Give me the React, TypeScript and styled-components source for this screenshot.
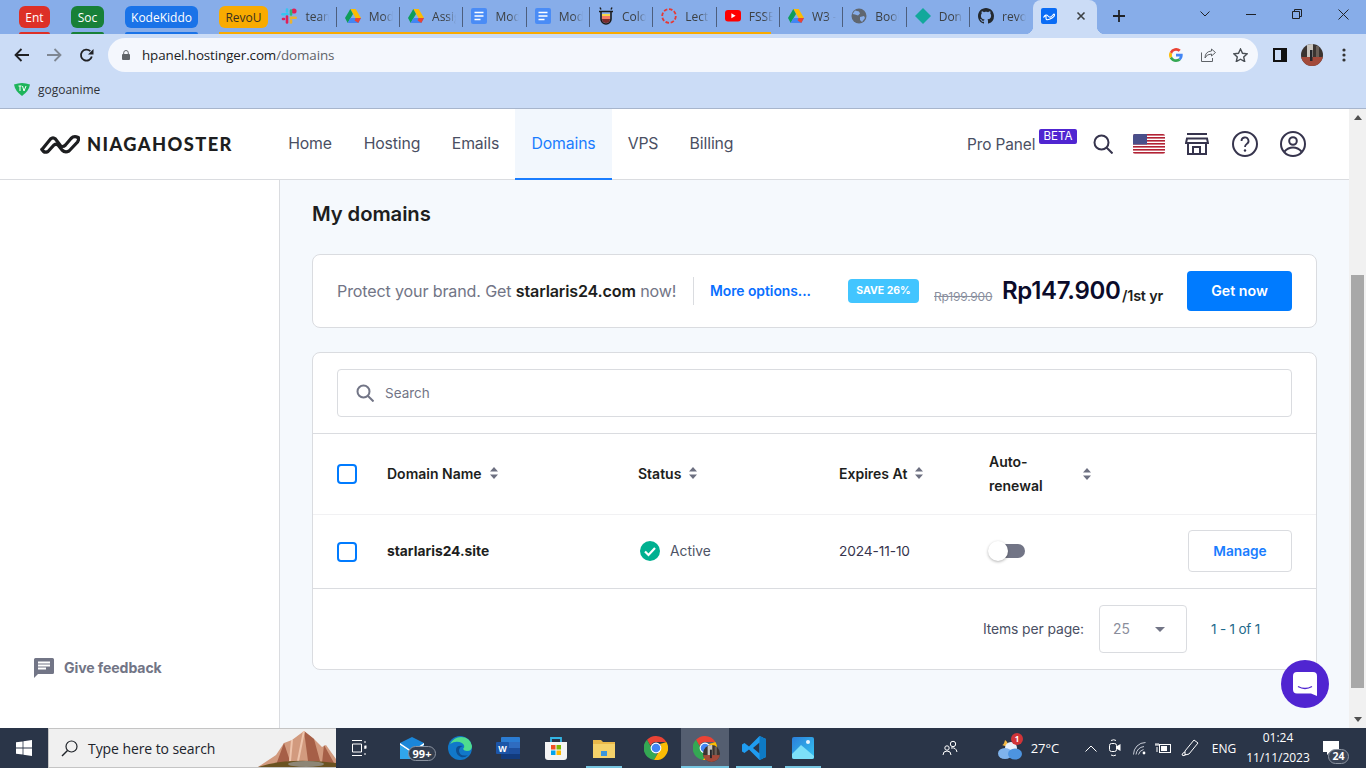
import React from "react";
import styled, { createGlobalStyle } from "styled-components";

const WEB = `"Inter", "Liberation Sans", sans-serif`;
const UI = `"Open Sans", "Noto Sans", sans-serif`;

const Global = createGlobalStyle`
  html, body { margin: 0; padding: 0; height: 100%; overflow: hidden; background: #fff; }
  * { box-sizing: border-box; }
`;

const Shell = styled.div`
  width: 1366px; height: 768px; display: flex; flex-direction: column; overflow: hidden; font-family: ${WEB};
`;

/* ---------- Chrome tabs ---------- */
const Strip = styled.div`
  height: 34px; background: #87ade9; display: flex; align-items: stretch; padding-left: 19px; flex: none;
`;
const Chip = styled.div<{ $bg: string; $w: number; $ml: number; $dark?: boolean }>`
  position: relative; width: ${p => p.$w}px; margin-left: ${p => p.$ml}px; flex: none; height: 22px; margin-top: 6px;
  border-radius: 6px; background: ${p => p.$bg}; color: ${p => (p.$dark ? "#3a3020" : "#fff")};
  font: 12px ${UI}; display: flex; align-items: center; justify-content: center;
  ${p => !p.$dark && `&::after { content: ""; position: absolute; left: 0; right: 0; top: 26px; height: 2px; background: ${p.$bg}; border-radius: 2px 2px 0 0; }`}
`;
const TabGroup = styled.div`
  position: relative; display: flex; margin-left: 21px; flex: none;
  &::after { content: ""; position: absolute; left: 0; right: 9px; bottom: 0; height: 2px; background: #f9ab00; }
`;
const GroupGap = styled.span`width: 5.4px; flex: none;`;
const Tab = styled.div`
  position: relative; width: 63.33px; flex: none; height: 32px; padding-left: 8px; display: flex; align-items: center; gap: 8px;
  color: #3c4043; font: 12px ${UI};
  &::after { content: ""; position: absolute; right: 0; top: 7px; height: 20px; width: 1px; background: #4d5f7e; }
`;
const TabLabel = styled.span`
  width: 24px; overflow: hidden; white-space: nowrap; -webkit-mask-image: linear-gradient(90deg, #000 60%, transparent);
  mask-image: linear-gradient(90deg, #000 60%, transparent);
`;
const LastTab = styled(Tab)`&::after { display: none; }`;
const ActiveTab = styled.div`
  position: relative; width: 64px; height: 34px; flex: none; background: #cbdcf6; border-radius: 8px 8px 0 0;
  display: flex; align-items: center; padding: 0 11px 2px 8px; justify-content: space-between;
  &::before, &::after { content: ""; position: absolute; bottom: 0; width: 8px; height: 8px; }
  &::before { left: -8px; background: radial-gradient(circle at 0 0, transparent 8px, #cbdcf6 8.5px); }
  &::after { right: -8px; background: radial-gradient(circle at 100% 0, transparent 8px, #cbdcf6 8.5px); }
`;
const NewTab = styled.div`width: 44px; flex: none; display: flex; align-items: center; justify-content: center; padding-bottom: 2px;`;
const WinControls = styled.div`margin-left: auto; display: flex;`;
const WinBtn = styled.div`width: 46px; display: flex; align-items: center; justify-content: center; padding-bottom: 6px;`;

/* ---------- Chrome toolbar ---------- */
const Toolbar = styled.div`
  height: 38px; background: #cbdcf6; display: flex; align-items: center; padding: 4px 6px 0 6px; flex: none;
`;
const ToolBtn = styled.div`width: 32px; height: 34px; flex: none; display: flex; align-items: center; justify-content: center;`;
const Omnibox = styled.div`
  flex: 1; height: 34px; margin: 0 6px; background: #f4f7fd; border-radius: 17px; display: flex; align-items: center;
  padding: 0 2px 0 14px; font: 13.4px ${UI}; color: #202124; letter-spacing: -0.1px;
`;
const Url = styled.span`margin-left: 12px; flex: 1; color: #202124; span { color: #5f6368; }`;
const Bookmarks = styled.div`
  height: 37px; background: #cbdcf6; border-bottom: 1px solid #a7b5cc; display: flex; align-items: center; gap: 8px;
  padding: 0 0 2px 14px; font: 12px ${UI}; color: #303338; flex: none; letter-spacing: -0.02px;
`;

/* ---------- Page ---------- */
const Viewport = styled.div`flex: 1; min-height: 0; display: flex; position: relative;`;
const Page = styled.div`flex: 1; min-width: 0; display: flex; flex-direction: column;`;
const Header = styled.header`
  height: 71px; flex: none; background: #fff; border-bottom: 1px solid #dadce0; display: flex; align-items: stretch; padding-left: 40px; padding-right: 43px;
`;
const Logo = styled.div`width: 191px; flex: none; display: flex; align-items: center; gap: 7px;`;
const LogoText = styled.span`font: 900 18.3px "Lato", sans-serif; letter-spacing: 1.4px; color: #1d1e20; white-space: nowrap;`;
const Nav = styled.nav`display: flex; margin-left: 41px;`;
const NavItem = styled.a<{ $w: number; $active?: boolean }>`
  width: ${p => p.$w + 32}px; display: flex; align-items: center; justify-content: center; font-size: 15.8px; letter-spacing: -0.13px; margin-bottom: -1px; white-space: nowrap;
  padding-bottom: 1px;
  color: ${p => (p.$active ? "#1a7dff" : "#4a4f63")}; background: ${p => (p.$active ? "#f2f7fd" : "transparent")};
  border-bottom: 2px solid ${p => (p.$active ? "#1a7dff" : "transparent")};
`;
const HeaderRight = styled.div`margin-left: auto; display: flex; align-items: center;`;
const ProPanel = styled.span`font-size: 15.4px; color: #4a4f63; letter-spacing: -0.1px; white-space: nowrap; width: 68px;`;
const Beta = styled.span`
  align-self: flex-start; margin: 20px 0 0 4px; width: 38px; height: 15px; background: #5025d1; color: #fff; border-radius: 2px;
  font-size: 11.5px; line-height: 15px; text-align: center;
`;
const HeadIcon = styled.div<{ $ml: number }>`margin-left: ${p => p.$ml}px; display: flex; flex: none;`;

const Body = styled.div`flex: 1; min-height: 0; display: flex;`;
const Sidebar = styled.aside`
  width: 280px; flex: none; background: #fff; border-right: 1px solid #dadce0; display: flex; flex-direction: column; justify-content: flex-end;
  padding: 0 0 50px 34px;
`;
const Feedback = styled.div`display: flex; align-items: center; gap: 10px; color: #727586; font-weight: 700; font-size: 14.1px; letter-spacing: -0.1px;`;
const FeedbackLabel = styled.span`padding-bottom: 2px;`;
const Main = styled.main`flex: 1; min-width: 0; background: #f5f9fd; padding: 20px 32px 0;`;
const Title = styled.h1`margin: 0 0 26px; font-size: 20.3px; line-height: 28px; font-weight: 600; color: #1d1e20; letter-spacing: -0.1px;`;
const Card = styled.section`background: #fff; border: 1px solid #dadce0; border-radius: 8px;`;
const Promo = styled(Card)`height: 74px; display: flex; align-items: center; padding: 0 24px 1px; margin-bottom: 24px;`;
const PromoText = styled.span`
  font-size: 16.1px; color: #727586; letter-spacing: -0.15px; white-space: nowrap; width: 340px;
  b { color: #1d1e20; font-weight: 600; }
`;
const Divider = styled.span`width: 1px; height: 28px; background: #dadce0; margin-left: 16px;`;
const More = styled.a`margin-left: 16px; width: 101px; color: #0a6fff; font-weight: 600; font-size: 13.9px; white-space: nowrap; letter-spacing: -0.05px;`;
const Save = styled.span`
  margin-left: 37px; width: 71px; height: 24px; border-radius: 4px; background: #42c5ff; color: #fff; font-size: 10.5px; font-weight: 700;
  display: flex; align-items: center; justify-content: center; white-space: nowrap;
`;
const OldPrice = styled.s`margin-left: 15px; width: 59px; margin-top: 12px; font-size: 12px; color: #8a8f9e; letter-spacing: -0.2px; white-space: nowrap;`;
const Price = styled.span`margin-left: 9px; font-size: 24px; font-weight: 600; color: #0b0b2a; letter-spacing: -0.3px; white-space: nowrap; width: 120px;`;
const Per = styled.span`margin-top: 9px; font-size: 14.4px; font-weight: 600; color: #1d1e20; white-space: nowrap; width: 42px; letter-spacing: -0.2px;`;
const GetNow = styled.button`
  margin-left: 23px; width: 105px; height: 40px; border: 0; border-radius: 4px; background: #007bff; color: #fff; font: 600 14.2px ${WEB};
`;
const SearchRow = styled.div`height: 81px; padding: 16px 24px; border-bottom: 1px solid #dadce0;`;
const SearchBox = styled.div`
  height: 48px; border: 1px solid #dadce0; border-radius: 4px; display: flex; align-items: center; gap: 11px; padding: 0 0 1px 18px;
  color: #727586; font-size: 13.5px;
`;
const GridRow = styled.div<{ $h: number; $line: string; $up?: boolean }>`
  display: grid; grid-template-columns: 50px 251px 201px 150px 1fr auto; align-items: center;
  height: ${p => p.$h}px; padding: 0 24px ${p => (p.$up ? 2 : 0)}px; border-bottom: 1px solid ${p => p.$line};
`;
const Check = styled.span<{ $lower?: boolean }>`
  display: block; width: 20px; height: 20px; border: 2px solid #007bff; border-radius: 4px; margin-top: ${p => (p.$lower ? 2 : 0)}px;
`;
const HeadCell = styled.div<{ $lift?: boolean }>`
  display: flex; align-items: center; gap: 8px; font-size: 14px; font-weight: 600; color: #1d1e20; padding-bottom: ${p => (p.$lift ? 2 : 0)}px;
`;
const WrapLabel = styled.span`width: 86px; line-height: 24px;`;
const DomainName = styled.span`font-size: 13.8px; font-weight: 700; color: #1d1e20;`;
const Status = styled.div`display: flex; align-items: center; gap: 10px; margin-left: 2px; color: #4e5365; font-size: 13.8px;`;
const DateText = styled.span`font-size: 13.7px; color: #36344d; letter-spacing: -0.1px;`;
const Toggle = styled.div`
  position: relative; width: 37px; height: 20px; margin-left: -1px;
  &::before { content: ""; position: absolute; left: 8px; right: 0; top: 3px; height: 14px; background: #727586; border-radius: 7px; }
  &::after { content: ""; position: absolute; left: 0; top: 0; width: 20px; height: 20px; border-radius: 50%; background: #fff; box-shadow: 0 1px 3px rgba(0,0,0,.3); }
`;
const Manage = styled.button`
  width: 104px; height: 42px; background: #fff; border: 1px solid #dadce0; border-radius: 4px; color: #1a7dff; font: 600 13.7px ${WEB};
`;
const Pager = styled.div`height: 80px; display: flex; align-items: center; justify-content: flex-end; padding-right: 56px; font-size: 13.5px; color: #4a4f63;`;
const PerPage = styled.span`font-size: 13.9px; letter-spacing: -0.1px;`;
const Select = styled.div`
  margin: 0 24px 0 15px; width: 88px; height: 48px; border: 1px solid #dadce0; border-radius: 4px; display: flex; align-items: center;
  justify-content: space-between; padding: 0 21px 0 13px; color: #8a8d9b; font-size: 13.8px;
  &::after { content: ""; border: 5px solid transparent; border-top: 5px solid #727586; border-bottom: 0; }
`;
const Range = styled.span`color: #1f6a8c; letter-spacing: -0.2px;`;
const Messenger = styled.div`
  position: absolute; right: 37px; bottom: 20px; width: 48px; height: 48px; border-radius: 50%; background: #5025d1; display: flex; align-items: center; justify-content: center;
`;
const Scrollbar = styled.div`width: 17px; flex: none; background: #f1f1f1; display: flex; flex-direction: column; align-items: center;`;
const ArrowBtn = styled.div<{ $down?: boolean }>`
  height: 17px; width: 17px; flex: none; display: flex; align-items: center; justify-content: center;
  &::after { content: ""; border: 4px solid transparent; ${p => (p.$down ? "border-top: 5px solid #505050; border-bottom: 0;" : "border-bottom: 5px solid #505050; border-top: 0;")} }
`;
const Thumb = styled.div`width: 13px; height: 413px; margin-top: 149px; background: #a8a8a8;`;
const ScrollGap = styled.div`flex: 1;`;

/* ---------- Taskbar ---------- */
const Taskbar = styled.footer`height: 40px; flex: none; background: #2a3548; display: flex; align-items: stretch; color: #fff; font-family: ${UI};`;
const StartBtn = styled.div`width: 48px; flex: none; display: flex; align-items: center; justify-content: center;`;
const SearchBar = styled.div`
  width: 288px; flex: none; background: #f0f0f0; border: 1px solid #c4c4c4; border-width: 1px 0 1px 1px; display: flex; align-items: center;
  padding-left: 12px; color: #20242c; font-size: 14px; position: relative; overflow: hidden;
`;
const SearchText = styled.span`margin-left: 10px; letter-spacing: -0.08px; white-space: nowrap;`;
const Mountains = styled.div`position: absolute; right: 0; bottom: 0; display: flex;`;
const AppSlot = styled.div<{ $ml?: number; $active?: boolean; $on?: boolean }>`
  position: relative; width: 48px; flex: none; margin-left: ${p => p.$ml ?? 0}px; display: flex; align-items: center; justify-content: center;
  background: ${p => (p.$active ? "#545e70" : "transparent")};
  ${p => p.$on && `&::after { content: ""; position: absolute; bottom: 0; left: ${p.$active ? 0 : 6}px; right: ${p.$active ? 0 : 6}px; height: 2px; background: #76c5e0; }`}
`;
const MiniAvatar = styled.div`position: absolute; left: 22px; top: 17px; display: flex;`;
const Pill = styled.span`
  position: absolute; right: 0; top: 18px; height: 15px; min-width: 28px; padding: 0 2px; border-radius: 8px; background: #333d4e; border: 1px solid #8b93a0;
  color: #fff; font: 700 11px/13px ${UI}; text-align: center;
`;
const Tray = styled.div`margin-left: auto; width: 436px; display: flex; align-items: center; flex: none;`;
const TraySlot = styled.div<{ $w: number; $ml?: number }>`
  position: relative; width: ${p => p.$w}px; margin-left: ${p => p.$ml ?? 0}px; flex: none; display: flex; align-items: center; justify-content: center; white-space: nowrap;
`;
const Temp = styled.span`font-size: 13px;`;
const Lang = styled.span`font-size: 12px;`;
const Clock = styled.div`font-size: 12px; line-height: 20px; text-align: center; white-space: nowrap;`;
const RedDot = styled.span`
  position: absolute; right: -1px; top: -3px; width: 12px; height: 12px; border-radius: 50%; background: #d13438; color: #fff; font: 700 8px/12px ${UI}; text-align: center;
`;
const Count = styled.span`
  position: absolute; right: 2px; top: 8px; width: 21px; height: 15px; border-radius: 8px; background: #3a4456; border: 1px solid #8b93a0;
  font: 700 10.5px/13px ${UI}; text-align: center; color: #fff;
`;

/* ---------- Drawings ---------- */
const Drive = () => (
  <svg width="16" height="14" viewBox="0 0 16 14" style={{ flex: "none" }}>
    <path d="M5.3 0h5.4l5.3 9h-5.4z" fill="#fbbc04" />
    <path d="M5.3 0L0 9l2.7 5 5.3-9z" fill="#0f9d58" />
    <path d="M2.7 14h10.6L16 9H5.4z" fill="#4285f4" />
    <path d="M13.3 14L16 9h-5.4l-1 2.6z" fill="#ea4335" />
  </svg>
);
const Doc = () => (
  <svg width="16" height="16" viewBox="0 0 16 16" style={{ flex: "none" }}>
    <rect width="16" height="16" rx="2" fill="#4a8cf6" />
    <path d="M3.5 4.5h9M3.5 8h9M3.5 11.5h6" stroke="#fff" strokeWidth="1.6" />
  </svg>
);
const Slack = () => (
  <svg width="16" height="16" viewBox="0 0 16 16" style={{ flex: "none" }}>
    <path d="M1.5 6.2h5" stroke="#36c5f0" strokeWidth="2.6" strokeLinecap="round" />
    <path d="M6 1.5v2" stroke="#36c5f0" strokeWidth="2.6" strokeLinecap="round" />
    <circle cx="13" cy="3" r="2.6" fill="#e01e5a" />
    <path d="M9.7 9.7h5" stroke="#ecb22e" strokeWidth="2.6" strokeLinecap="round" />
    <path d="M10 12.5v2" stroke="#ecb22e" strokeWidth="2.6" strokeLinecap="round" />
    <path d="M6 8.5v6" stroke="#e01e5a" strokeWidth="2.6" strokeLinecap="round" />
    <path d="M2 11h1" stroke="#e01e5a" strokeWidth="2.6" strokeLinecap="round" />
    <path d="M10 2.5v4" stroke="#2eb67d" strokeWidth="2.6" strokeLinecap="round" />
  </svg>
);
const Potion = () => (
  <svg width="16" height="18" viewBox="0 0 16 18" style={{ flex: "none" }}>
    <path d="M1 4.5h14M3 5v7a5 5 0 0 0 10 0V5" fill="none" stroke="#1b1b1b" strokeWidth="1.6" />
    <path d="M4 7h8v2H4z" fill="#f6d548" />
    <path d="M4 9h8v3H4z" fill="#f47a64" />
    <path d="M4 12h8a4 4 0 0 1-8 0z" fill="#7a2c2c" />
    <path d="M2 0.5l1 2M14 0.5l-1 2" stroke="#1b1b1b" strokeWidth="1.4" />
  </svg>
);
const DashRing = () => (
  <svg width="16" height="16" viewBox="0 0 16 16" style={{ flex: "none" }}>
    <circle cx="8" cy="8" r="6.8" fill="none" stroke="#e53935" strokeWidth="1.8" strokeDasharray="3.6 1.7" />
  </svg>
);
const YouTube = () => (
  <svg width="16" height="12" viewBox="0 0 16 12" style={{ flex: "none" }}>
    <rect width="16" height="11.5" rx="3" fill="#f00" />
    <path d="M6.4 3.3v5l4.2-2.5z" fill="#fff" />
  </svg>
);
const Globe = () => (
  <svg width="16" height="16" viewBox="0 0 16 16" style={{ flex: "none" }}>
    <circle cx="8" cy="8" r="7.5" fill="#5f6670" />
    <path d="M4 2.5l4 1 1 2-2 2-3-1-2.5-.5zM9 9l4-1 1 2-3 4-2-2z" fill="#87ade9" />
  </svg>
);
const Diamond = () => (
  <svg width="16" height="16" viewBox="0 0 16 16" style={{ flex: "none" }}>
    <path d="M8 0l8 8-8 8-8-8z" fill="#12a89b" />
  </svg>
);
const GitHub = () => (
  <svg width="16" height="16" viewBox="0 0 16 16" style={{ flex: "none" }}>
    <path fill="#24292f" d="M8 0C3.58 0 0 3.58 0 8c0 3.54 2.29 6.53 5.47 7.59.4.07.55-.17.55-.38 0-.19-.01-.82-.01-1.49-2.01.37-2.53-.49-2.69-.94-.09-.23-.48-.94-.82-1.13-.28-.15-.68-.52-.01-.53.63-.01 1.08.58 1.23.82.72 1.21 1.87.87 2.33.66.07-.52.28-.87.51-1.07-1.78-.2-3.64-.89-3.64-3.95 0-.87.31-1.59.82-2.15-.08-.2-.36-1.02.08-2.12 0 0 .67-.21 2.2.82.64-.18 1.32-.27 2-.27s1.36.09 2 .27c1.53-1.04 2.2-.82 2.2-.82.44 1.1.16 1.92.08 2.12.51.56.82 1.27.82 2.15 0 3.07-1.87 3.75-3.65 3.95.29.25.54.73.54 1.48 0 1.07-.01 1.93-.01 2.2 0 .21.15.46.55.38A8.01 8.01 0 0 0 16 8c0-4.42-3.58-8-8-8z" />
  </svg>
);
const WaveMark = () => (
  <svg width="40" height="20" viewBox="0 0 40 20" style={{ flex: "none" }}>
    <path d="M2 15.5 L10.5 5 Q13 2.5 15.5 5 L20 11 Q22.5 14 25.5 11 L31 4.5 Q34 1.5 38 3.5" fill="none" stroke="#1d1e20" strokeWidth="3.2" strokeLinecap="round" />
    <path d="M2 15.5 Q4 19.5 8 17.5 L14 11 Q16 9.5 18 11 L22 16 Q25 19 29 17 L37.5 8 Q39.5 5 38 3.5" fill="none" stroke="#1d1e20" strokeWidth="3.2" strokeLinecap="round" />
  </svg>
);
const ChromeLogo = ({ size = 24 }: { size?: number }) => (
  <svg width={size} height={size} viewBox="0 0 24 24" style={{ flex: "none" }}>
    <path d="M12 0a12 12 0 0 1 10.4 6H12a6 6 0 0 0-5.6 3.8L3 3.8A12 12 0 0 1 12 0z" fill="#ea4335" />
    <path d="M3 3.8l5.2 9.2a5 5 0 0 0 5 5L10 24A12 12 0 0 1 3 3.8z" fill="#34a853" />
    <path d="M22.4 6A12 12 0 0 1 10 23.9l5.4-9.4A5 5 0 0 0 16 8z" fill="#fbbc04" />
    <circle cx="12" cy="12" r="5.4" fill="#fff" />
    <circle cx="12" cy="12" r="4.3" fill="#4285f4" />
  </svg>
);
const GLogo = () => (
  <svg width="14" height="14" viewBox="0 0 14 14">
    <path d="M13.7 7.1c0-.5 0-.9-.1-1.3H7v2.6h3.8c-.2.9-.7 1.6-1.4 2.1l2.2 1.7c1.3-1.2 2.1-3 2.1-5.1z" fill="#4285f4" />
    <path d="M7 14c1.9 0 3.4-.6 4.6-1.7L9.4 10.6c-.6.4-1.4.7-2.4.7-1.8 0-3.4-1.2-3.9-2.9L.8 10.2C2 12.5 4.3 14 7 14z" fill="#34a853" />
    <path d="M3.1 8.4a4.2 4.2 0 0 1 0-2.7L.8 3.9a7 7 0 0 0 0 6.3z" fill="#fbbc04" />
    <path d="M7 2.8c1 0 1.9.4 2.7 1l2-2A7 7 0 0 0 .8 3.9l2.3 1.8C3.6 4 5.2 2.8 7 2.8z" fill="#ea4335" />
  </svg>
);
const Flag = () => (
  <svg width="32" height="20" viewBox="0 0 32 20">
    <defs><clipPath id="flagclip"><rect width="32" height="20" rx="2" /></clipPath></defs>
    <g clipPath="url(#flagclip)">
      <rect width="32" height="20" fill="#fff" />
      {[0, 3, 6, 9, 12, 15, 18].map(y => <rect key={y} y={y} width="32" height="1.6" fill="#b22234" />)}
      <rect width="14" height="10.5" fill="#4a4f8a" />
    </g>
  </svg>
);
const Avatar = ({ size }: { size: number }) => (
  <svg width={size} height={size} viewBox="0 0 22 22" style={{ flex: "none" }}>
    <defs><clipPath id={`av${size}`}><circle cx="11" cy="11" r="11" /></clipPath></defs>
    <g clipPath={`url(#av${size})`}>
      <rect width="22" height="22" fill="#3b3430" />
      <rect x="6" y="0" width="6" height="14" fill="#c9c5bf" />
      <rect x="15" y="2" width="3" height="12" fill="#6b6058" />
      <rect y="13" width="22" height="9" fill="#a34a3a" />
      <rect x="9" y="6" width="2.5" height="11" fill="#24262b" />
    </g>
  </svg>
);

const tabs: [React.ReactNode, string][] = [
  [<Slack />, "team"], [<Drive />, "Mod"], [<Drive />, "Assig"], [<Doc />, "Mod"], [<Doc />, "Mod"],
  [<Potion />, "Colo"], [<DashRing />, "Lectu"], [<YouTube />, "FSSE"],
];
const tabsAfter: [React.ReactNode, string][] = [[<Drive />, "W3 -"], [<Globe />, "Bool"], [<Diamond />, "Don"]];

const Sort = () => (
  <svg width="8" height="12" viewBox="0 0 8 12" style={{ flex: "none" }}>
    <path d="M4 0l4 4.6H0zM4 12L0 7.4h8z" fill="#6d7081" />
  </svg>
);

export default function App() {
  return (
    <Shell>
      <Global />
      <Strip>
        <Chip $bg="#dd3027" $w={31} $ml={0}>Ent</Chip>
        <Chip $bg="#188038" $w={33} $ml={21}>Soc</Chip>
        <Chip $bg="#1a73e8" $w={73} $ml={21}>KodeKiddo</Chip>
        <TabGroup>
          <Chip $bg="#f9ab00" $w={49} $ml={0} $dark>RevoU</Chip>
          <GroupGap />
          {tabs.map(([icon, label], i) => <Tab key={i}>{icon}<TabLabel>{label}</TabLabel></Tab>)}
        </TabGroup>
        {tabsAfter.map(([icon, label], i) => <Tab key={i}>{icon}<TabLabel>{label}</TabLabel></Tab>)}
        <LastTab><GitHub /><TabLabel>revo</TabLabel></LastTab>
        <ActiveTab>
          <svg width="16" height="16" viewBox="0 0 16 16">
            <rect width="16" height="16" rx="2" fill="#0a6cf5" />
            <path d="M2.5 9.5Q5 5.5 7 8t4.5-.5Q13.5 5 13.5 7T9 11 5 9.5 2.5 9.5z" fill="none" stroke="#fff" strokeWidth="1.1" />
          </svg>
          <svg width="10" height="10" viewBox="0 0 10 10"><path d="M1.5 1.5l7 7M8.5 1.5l-7 7" stroke="#3c4043" strokeWidth="1.6" /></svg>
        </ActiveTab>
        <NewTab>
          <svg width="12" height="12" viewBox="0 0 12 12"><path d="M6 0v12M0 6h12" stroke="#1f2227" strokeWidth="1.8" /></svg>
        </NewTab>
        <WinControls>
          <WinBtn><svg width="10" height="6" viewBox="0 0 10 6"><path d="M.5.5L5 5 9.5.5" fill="none" stroke="#1f2227" /></svg></WinBtn>
          <WinBtn><svg width="10" height="1" viewBox="0 0 10 1"><path d="M0 .5h10" stroke="#1f2227" /></svg></WinBtn>
          <WinBtn><svg width="10" height="10" viewBox="0 0 10 10"><path d="M.5 2.5h7v7h-7zM2.5 2.5v-2h7v7h-2" fill="none" stroke="#1f2227" /></svg></WinBtn>
          <WinBtn><svg width="11" height="11" viewBox="0 0 11 11"><path d="M.5.5l10 10M10.5.5l-10 10" stroke="#1f2227" /></svg></WinBtn>
        </WinControls>
      </Strip>
      <Toolbar>
        <ToolBtn><svg width="16" height="14" viewBox="0 0 16 14"><path d="M15 7H2M7.5 1L1.5 7l6 6" fill="none" stroke="#202124" strokeWidth="1.8" /></svg></ToolBtn>
        <ToolBtn><svg width="16" height="14" viewBox="0 0 16 14"><path d="M1 7h13M8.5 1l6 6-6 6" fill="none" stroke="#7f8793" strokeWidth="1.8" /></svg></ToolBtn>
        <ToolBtn>
          <svg width="15" height="15" viewBox="0 0 15 15"><path d="M12.8 8.5A5.5 5.5 0 1 1 11.3 3.2" fill="none" stroke="#202124" strokeWidth="1.8" /><path d="M14.5 1v5.5H9z" fill="#202124" /></svg>
        </ToolBtn>
        <Omnibox>
          <svg width="8" height="10" viewBox="0 0 8 10" style={{ flex: "none" }}><path d="M1.7 4V2.8a2.3 2.3 0 0 1 4.6 0V4" fill="none" stroke="#5f6368" /><rect y="4" width="8" height="6" rx="1" fill="#5f6368" /></svg>
          <Url>hpanel.hostinger.com<span>/domains</span></Url>
          <ToolBtn><GLogo /></ToolBtn>
          <ToolBtn>
            <svg width="15" height="14" viewBox="0 0 15 14"><path d="M10.5 1l4 3.5-4 3.5V6Q5.5 6 4 10 4 3.5 10.5 3zM.5 4.5v9h11V10" fill="none" stroke="#5f6368" /></svg>
          </ToolBtn>
          <ToolBtn>
            <svg width="15" height="14" viewBox="0 0 15 14"><path d="M7.5 1l2 4.3 4.7.5-3.5 3.2 1 4.6-4.2-2.4-4.2 2.4 1-4.6L.8 5.8l4.7-.5z" fill="none" stroke="#4a4f55" strokeWidth="1.4" /></svg>
          </ToolBtn>
        </Omnibox>
        <ToolBtn><svg width="14" height="14" viewBox="0 0 14 14"><path d="M1 1h12v12H1z" fill="none" stroke="#111" strokeWidth="2" /><rect x="8" y="1" width="5" height="12" fill="#111" /></svg></ToolBtn>
        <ToolBtn><Avatar size={22} /></ToolBtn>
        <ToolBtn><svg width="4" height="14" viewBox="0 0 4 14"><g fill="#333"><circle cx="2" cy="2" r="1.6" /><circle cx="2" cy="7" r="1.6" /><circle cx="2" cy="12" r="1.6" /></g></svg></ToolBtn>
      </Toolbar>
      <Bookmarks>
        <svg width="16" height="14" viewBox="0 0 16 14" style={{ flex: "none" }}>
          <path d="M0 2.5Q8-.5 16 2.5 15 9 8 14 1 9 0 2.5z" fill="#1eb45b" />
          <path d="M4.5 4h3M6 4v5M8.5 4l1.5 5 2-5" fill="none" stroke="#fff" strokeWidth="1" />
        </svg>
        gogoanime
      </Bookmarks>
      <Viewport>
        <Page>
          <Header>
            <Logo><WaveMark /><LogoText>NIAGAHOSTER</LogoText></Logo>
            <Nav>
              <NavItem $w={44}>Home</NavItem>
              <NavItem $w={56}>Hosting</NavItem>
              <NavItem $w={47}>Emails</NavItem>
              <NavItem $w={65} $active>Domains</NavItem>
              <NavItem $w={30}>VPS</NavItem>
              <NavItem $w={43}>Billing</NavItem>
            </Nav>
            <HeaderRight>
              <ProPanel>Pro Panel</ProPanel>
              <Beta>BETA</Beta>
              <HeadIcon $ml={16}>
                <svg width="20" height="20" viewBox="0 0 20 20"><circle cx="8.5" cy="8.5" r="7" fill="none" stroke="#36344d" strokeWidth="2" /><path d="M13.5 13.5L19.5 19.5" stroke="#36344d" strokeWidth="2" /></svg>
              </HeadIcon>
              <HeadIcon $ml={20}><Flag /></HeadIcon>
              <HeadIcon $ml={20}>
                <svg width="24" height="22" viewBox="0 0 24 22"><path d="M2 1h20M2 5.5h20l1 4.5H1zM3 10v11h18V10M8 21v-7h7v7" fill="none" stroke="#36344d" strokeWidth="2" /></svg>
              </HeadIcon>
              <HeadIcon $ml={23}>
                <svg width="26" height="26" viewBox="0 0 26 26"><circle cx="13" cy="13" r="12" fill="none" stroke="#36344d" strokeWidth="2" /><path d="M9.5 10a3.5 3.5 0 1 1 5.2 3c-1.2.8-1.7 1.4-1.7 3" fill="none" stroke="#36344d" strokeWidth="1.8" /><circle cx="13" cy="19.5" r="1.2" fill="#36344d" /></svg>
              </HeadIcon>
              <HeadIcon $ml={22}>
                <svg width="26" height="26" viewBox="0 0 26 26"><circle cx="13" cy="13" r="12" fill="none" stroke="#36344d" strokeWidth="2" /><circle cx="13" cy="10" r="3.8" fill="none" stroke="#36344d" strokeWidth="2" /><path d="M4.5 20.5Q8 16.5 13 16.5t8.5 4" fill="none" stroke="#36344d" strokeWidth="2" /></svg>
              </HeadIcon>
            </HeaderRight>
          </Header>
          <Body>
            <Sidebar>
              <Feedback>
                <svg width="20" height="20" viewBox="0 0 20 20" style={{ flex: "none" }}>
                  <path d="M1.5 0h17A1.5 1.5 0 0 1 20 1.5v13a1.5 1.5 0 0 1-1.5 1.5H4l-4 4V1.5A1.5 1.5 0 0 1 1.5 0z" fill="#727586" />
                  <path d="M4 4.5h12M4 7.5h12M4 10.5h8" stroke="#fff" strokeWidth="1.8" />
                </svg>
                <FeedbackLabel>Give feedback</FeedbackLabel>
              </Feedback>
            </Sidebar>
            <Main>
              <Title>My domains</Title>
              <Promo>
                <PromoText>Protect your brand. Get <b>starlaris24.com</b> now!</PromoText>
                <Divider />
                <More>More options...</More>
                <Save>SAVE 26%</Save>
                <OldPrice>Rp199.900</OldPrice>
                <Price>Rp147.900</Price>
                <Per>/1st yr</Per>
                <GetNow>Get now</GetNow>
              </Promo>
              <Card>
                <SearchRow>
                  <SearchBox>
                    <svg width="18" height="18" viewBox="0 0 18 18" style={{ flex: "none" }}><circle cx="7.5" cy="7.5" r="6" fill="none" stroke="#727586" strokeWidth="2" /><path d="M12 12l5.5 5.5" stroke="#727586" strokeWidth="2" /></svg>
                    Search
                  </SearchBox>
                </SearchRow>
                <GridRow $h={81} $line="#f1f1f3">
                  <Check />
                  <HeadCell $lift>Domain Name <Sort /></HeadCell>
                  <HeadCell $lift>Status <Sort /></HeadCell>
                  <HeadCell $lift>Expires At <Sort /></HeadCell>
                  <HeadCell><WrapLabel>Auto-<br />renewal</WrapLabel><Sort /></HeadCell>
                </GridRow>
                <GridRow $h={74} $line="#dadce0" $up>
                  <Check $lower />
                  <DomainName>starlaris24.site</DomainName>
                  <Status>
                    <svg width="20" height="20" viewBox="0 0 20 20" style={{ flex: "none" }}><circle cx="10" cy="10" r="10" fill="#00b090" /><path d="M5 10.5l3.5 3.5L15 7" fill="none" stroke="#fff" strokeWidth="2.2" /></svg>
                    Active
                  </Status>
                  <DateText>2024-11-10</DateText>
                  <Toggle />
                  <Manage>Manage</Manage>
                </GridRow>
                <Pager>
                  <PerPage>Items per page:</PerPage>
                  <Select>25</Select>
                  <Range>1 - 1 of 1</Range>
                </Pager>
              </Card>
            </Main>
          </Body>
        </Page>
        <Scrollbar>
          <ArrowBtn />
          <Thumb />
          <ScrollGap />
          <ArrowBtn $down />
        </Scrollbar>
        <Messenger>
          <svg width="24" height="24" viewBox="0 0 24 24">
            <path d="M4 0h16a4 4 0 0 1 4 4v20l-6-2.5H4a4 4 0 0 1-4-4V4a4 4 0 0 1 4-4z" fill="#fff" />
            <path d="M5 14.5Q12 18.5 19 14.5" fill="none" stroke="#5025d1" strokeWidth="1.4" />
          </svg>
        </Messenger>
      </Viewport>
      <Taskbar>
        <StartBtn>
          <svg width="16" height="16" viewBox="0 0 16 16"><path d="M0 2.3l6.6-.9v6.2H0zM7.4 1.3L16 0v7.6H7.4zM0 8.4h6.6v6.2L0 13.7zM7.4 8.4H16V16l-8.6-1.3z" fill="#fff" /></svg>
        </StartBtn>
        <SearchBar>
          <svg width="17" height="17" viewBox="0 0 17 17" style={{ flex: "none" }}><circle cx="10.5" cy="6.5" r="5.5" fill="none" stroke="#1f2329" strokeWidth="1.2" /><path d="M6.5 10.5L1 16" stroke="#1f2329" strokeWidth="1.4" /></svg>
          <SearchText>Type here to search</SearchText>
          <Mountains>
            <svg width="78" height="36" viewBox="0 0 78 36">
              <path d="M0 36L18 24 26 12l8-3 12-9 10 8 8 8 4-2 10 14v8z" fill="#d29a7e" />
              <path d="M26 12l6 18-14 4zM46 0l4 30 12 0-6-22zM66 14l-2 18 12 0z" fill="#a65f47" />
              <path d="M34 9l-2 21M46 0l-6 30" stroke="#eec4ac" strokeWidth="2" fill="none" />
              <path d="M0 36q30-10 78-4v4z" fill="#6a5220" />
              <ellipse cx="48" cy="33" rx="18" ry="3" fill="#8d8676" />
            </svg>
          </Mountains>
        </SearchBar>
        <AppSlot>
          <svg width="16" height="16" viewBox="0 0 16 16"><path d="M0 .5h10M0 15.5h10M.5 4h9v8h-9zM13 1v2M13 6v3M13 13v2" fill="none" stroke="#fff" /><rect x="12.5" y="5.5" width="2" height="3" fill="#fff" /></svg>
        </AppSlot>
        <AppSlot $ml={4}>
          <svg width="24" height="22" viewBox="0 0 24 22"><path d="M0 6l12-6 12 6v16H0z" fill="#1a86d8" /><path d="M0 6l12 8 12-8v2l-12 8L0 8z" fill="#fff" /><path d="M0 8l12 8 12-8v14H0z" fill="#30a5ea" /></svg>
          <Pill>99+</Pill>
        </AppSlot>
        <AppSlot>
          <svg width="24" height="24" viewBox="0 0 24 24"><circle cx="12" cy="12" r="12" fill="#1178c9" /><path d="M2 8Q6 1 13 1q9 0 11 9 0 5-5 5-3 0-4-2 3-3-1-6Q8 4 2 8z" fill="#4fdc8f" /><path d="M8 14q0 5 5 7 4 1 7-2-8 2-9-4 0-4 4-5-7-1-7 4z" fill="#0e4f91" /></svg>
        </AppSlot>
        <AppSlot>
          <svg width="24" height="22" viewBox="0 0 24 22"><rect x="5" width="19" height="22" rx="1" fill="#2b7cd3" /><rect x="5" y="5" width="19" height="6" fill="#2f6cc0" /><rect x="5" y="11" width="19" height="6" fill="#1d4f9e" /><rect x="5" y="17" width="19" height="5" fill="#123b7d" /><rect y="5" width="13" height="12" rx="1" fill="#1c55a8" /><text x="6.5" y="14.5" textAnchor="middle" fontSize="9" fontWeight="700" fill="#fff" fontFamily="Liberation Sans">W</text></svg>
        </AppSlot>
        <AppSlot>
          <svg width="24" height="24" viewBox="0 0 24 24"><path d="M7 6V2h10v4" fill="none" stroke="#33b5e5" strokeWidth="1.8" /><path d="M1 6h22v15a3 3 0 0 1-3 3H4a3 3 0 0 1-3-3z" fill="#f4f4f4" /><rect x="7" y="9" width="4.5" height="4.5" fill="#f25022" /><rect x="12.5" y="9" width="4.5" height="4.5" fill="#7fba00" /><rect x="7" y="14.5" width="4.5" height="4.5" fill="#00a4ef" /><rect x="12.5" y="14.5" width="4.5" height="4.5" fill="#ffb900" /></svg>
        </AppSlot>
        <AppSlot $on>
          <svg width="22" height="20" viewBox="0 0 22 20"><path d="M0 2h8l2 2h12v16H0z" fill="#eab94a" /><path d="M0 6h22v14H0z" fill="#f5d26a" /><path d="M8 13h6v5H8z" fill="#3a96dd" /></svg>
        </AppSlot>
        <AppSlot $ml={4}><ChromeLogo /></AppSlot>
        <AppSlot $ml={1} $active $on>
          <ChromeLogo />
          <MiniAvatar><Avatar size={17} /></MiniAvatar>
        </AppSlot>
        <AppSlot $ml={1} $on>
          <svg width="24" height="24" viewBox="0 0 24 24"><path d="M17.5 0L24 3v18l-6.5 3L7 13.5 2.5 17 0 15.5V8.5L2.5 7 7 10.5z" fill="#1f9cf0" /><path d="M17.5 6.5L11 12l6.5 5.5z" fill="#2a3548" /><path d="M17.5 0L24 3v18l-6.5 3z" fill="#0e7ac5" /></svg>
        </AppSlot>
        <AppSlot $ml={1} $on>
          <svg width="22" height="22" viewBox="0 0 22 22"><defs><linearGradient id="ph" x1="0" y1="0" x2="1" y2="1"><stop offset="0" stopColor="#2a7fdb" /><stop offset="1" stopColor="#36c5f0" /></linearGradient></defs><rect width="22" height="22" rx="2" fill="url(#ph)" /><path d="M0 17l9-9 13 11v1a2 2 0 0 1-2 2H2a2 2 0 0 1-2-2z" fill="#7de0f8" /><circle cx="16" cy="5" r="2" fill="#e8f4ff" /></svg>
        </AppSlot>
        <Tray>
          <TraySlot $w={40}>
            <svg width="16" height="16" viewBox="0 0 16 16"><g fill="none" stroke="#fff"><circle cx="11" cy="4" r="2.7" /><circle cx="5" cy="8" r="2.2" /><path d="M1 15q0-4 4-4t4 4M9 8q5-1 6 4" /></g></svg>
          </TraySlot>
          <TraySlot $w={24} $ml={28}>
            <svg width="24" height="24" viewBox="0 0 24 24"><path d="M4 9q2 0 3-5 4 3 3 7z" fill="#f5b942" /><circle cx="13" cy="12" r="6" fill="#e8f1fb" /><ellipse cx="7" cy="17.5" rx="7" ry="5.5" fill="#7fb3ec" /><ellipse cx="17" cy="18" rx="7" ry="5.5" fill="#4d94e0" /></svg>
            <RedDot>1</RedDot>
          </TraySlot>
          <TraySlot $w={30} $ml={8}><Temp>27°C</Temp></TraySlot>
          <TraySlot $w={24} $ml={19}><svg width="12" height="7" viewBox="0 0 12 7"><path d="M.5 6.5L6 1l5.5 5.5" fill="none" stroke="#fff" /></svg></TraySlot>
          <TraySlot $w={24}><svg width="12" height="18" viewBox="0 0 12 18"><rect x=".5" y="4.5" width="7" height="8" rx="2" fill="none" stroke="#fff" /><path d="M8 7l3.5-2v7L8 10z" fill="#fff" /><path d="M2 1.5q3-1.5 5 0M2 16q3 1.5 5 0" fill="none" stroke="#fff" /></svg></TraySlot>
          <TraySlot $w={25}><svg width="13" height="13" viewBox="0 0 13 13"><path d="M.5 12.5a12 12 0 0 1 12-12M3 12.5a9.5 9.5 0 0 1 8-8M5.5 12.5a7 7 0 0 1 5-5" fill="none" stroke="#d8dde5" strokeWidth=".9" /><circle cx="11" cy="11" r="1.4" fill="#fff" /></svg></TraySlot>
          <TraySlot $w={22}><svg width="16" height="11" viewBox="0 0 16 11"><rect x="4.5" y="1.5" width="11" height="8" fill="none" stroke="#fff" /><rect x="6" y="3" width="6" height="5" fill="#fff" /><path d="M0 2h4M1 0v2M3 0v2M2 4v5" stroke="#fff" /></svg></TraySlot>
          <TraySlot $w={24} $ml={4}><svg width="18" height="18" viewBox="0 0 18 18"><path d="M13 1l4 3-9 11-4 1 0-4zM4 13q-3 1-3 3 2 2 4-1" fill="none" stroke="#fff" /></svg></TraySlot>
          <TraySlot $w={26} $ml={9}><Lang>ENG</Lang></TraySlot>
          <TraySlot $w={64} $ml={9}><Clock>01:24<br />11/11/2023</Clock></TraySlot>
          <TraySlot $w={40} $ml={1}>
            <svg width="16" height="14" viewBox="0 0 16 14"><path d="M0 0h16v11H7l-3 3v-3H0z" fill="#fff" /></svg>
            <Count>24</Count>
          </TraySlot>
        </Tray>
      </Taskbar>
    </Shell>
  );
}
